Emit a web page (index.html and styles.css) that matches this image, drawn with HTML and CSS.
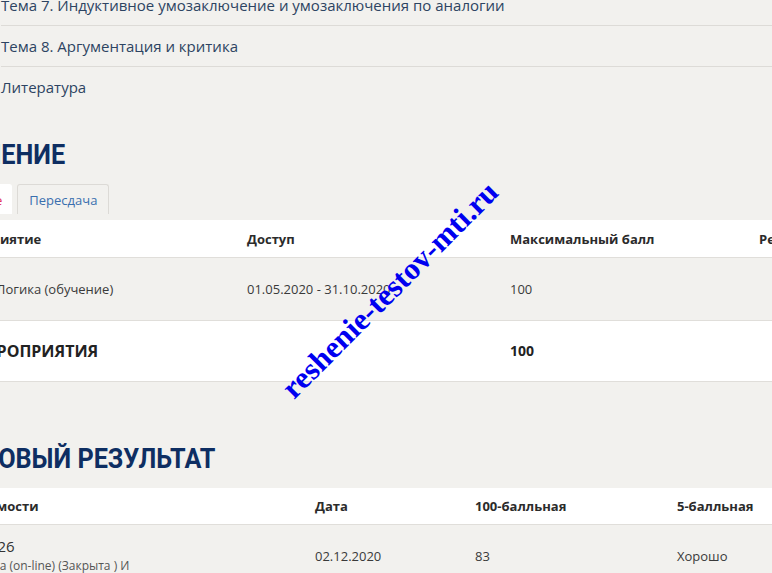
FILE: index.html
```html
<!DOCTYPE html>
<html lang="ru">
<head>
<meta charset="utf-8">
<title>Логика — обучение</title>
<link rel="stylesheet" href="styles.css">
</head>
<body>
<div class="viewport">
  <div class="page">
    <ul class="topics">
      <li>Тема 7. Индуктивное умозаключение и умозаключения по аналогии</li>
      <li>Тема 8. Аргументация и критика</li>
      <li>Литература</li>
    </ul>

    <h2 class="section-title section-title--first">Обучение</h2>

    <div class="tabs">
      <span class="tab tab--active">Обучение</span>
      <span class="tab">Пересдача</span>
    </div>

    <table class="grid grid--events">
      <thead>
        <tr>
          <th>Мероприятие</th>
          <th>Доступ</th>
          <th>Максимальный балл</th>
          <th>Результат</th>
        </tr>
      </thead>
      <tbody>
        <tr class="row-shaded">
          <td>Зачёт – Логика (обучение)</td>
          <td>01.05.2020 - 31.10.2020</td>
          <td>100</td>
          <td></td>
        </tr>
        <tr class="row-total">
          <td><span class="total-label">За мероприятия</span></td>
          <td></td>
          <td>100</td>
          <td></td>
        </tr>
      </tbody>
    </table>

    <h2 class="section-title section-title--second">Итоговый результат</h2>

    <table class="grid grid--result">
      <thead>
        <tr>
          <th>№ ведомости</th>
          <th>Дата</th>
          <th>100-балльная</th>
          <th>5-балльная</th>
        </tr>
      </thead>
      <tbody>
        <tr class="row-shaded">
          <td>
            <div class="sheet-no">ВД-11426</div>
            <div class="sheet-note">ЭК Логика (on-line) (Закрыта ) И</div>
          </td>
          <td>02.12.2020</td>
          <td>83</td>
          <td>Хорошо</td>
        </tr>
      </tbody>
    </table>
  </div>

  <span class="watermark">reshenie-testov-mti.ru</span>
</div>
</body>
</html>
```

FILE: styles.css
```css
html, body {
  margin: 0;
  padding: 0;
  background: #f2f1ee;
  overflow: hidden;
}

body {
  font-family: "Open Sans", "Liberation Sans", sans-serif;
  color: #333;
}

.viewport {
  position: relative;
  width: 772px;
  height: 573px;
  overflow: hidden;
}

/* page is scrolled right and down inside the window */
.page {
  width: 1100px;
  margin-left: -70px;
  margin-top: -15px;
}

/* topic list */
.topics {
  list-style: none;
  margin: 0;
  padding: 0 0 0 71px;
}

.topics li {
  padding: 10px 0;
  line-height: 20px;
  font-size: 15px;
  color: #2d4462;
  border-bottom: 1px solid #dddbd7;
}

.topics li:last-child {
  border-bottom: none;
}

/* section headings: a narrow display face */
.section-title {
  margin: 0 0 0 5px;
  font-family: Roboto, "Open Sans", sans-serif;
  font-size: 28px;
  line-height: 34px;
  font-weight: 700;
  text-transform: uppercase;
  color: #0e2e62;
  transform: scaleX(0.9);
  transform-origin: left center;
}

.section-title--first {
  margin-top: 31px;
}

.section-title--second {
  margin-top: 60px;
}

/* tabs */
.tabs {
  display: flex;
  gap: 5px;
  margin-top: 12px;
  height: 30px;
}

.tab {
  box-sizing: border-box;
  height: 30px;
  padding: 0 11px;
  line-height: 30px;
  font-size: 13px;
  color: #3a6fae;
  border: 1px solid #dcdad6;
  border-bottom: none;
  border-radius: 3px 3px 0 0;
}

.tab--active {
  background: #fff;
  border-color: #fff;
  color: #e2325f;
  padding: 0 9px 0 8px;
}

/* tables */
.grid {
  width: 100%;
  border-collapse: collapse;
  table-layout: fixed;
  font-size: 13px;
}

.grid--events {
  margin-top: 6px;
}

.grid--result {
  margin-top: 12px;
}

.grid th {
  background: #fff;
  text-align: left;
  font-weight: 700;
  color: #2b2b2b;
  padding: 10px 17px 9px;
  line-height: 18px;
  border-bottom: 1px solid #e0deda;
  white-space: nowrap;
}

.grid td {
  padding: 0 17px;
  line-height: 18px;
  border-bottom: 1px solid #e0deda;
  color: #3a3a3a;
  vertical-align: middle;
  white-space: nowrap;
}

.grid--events td {
  height: 62px;
}

.grid--events th:nth-child(1) { width: 266px; }
.grid--events th:nth-child(2) { width: 229px; }
.grid--events th:nth-child(3) { width: 215px; }

.grid--result th {
  padding: 9px 17px;
}

.grid--result th:nth-child(1) { width: 334px; }
.grid--result th:nth-child(2) { width: 126px; }
.grid--result th:nth-child(3) { width: 168px; }

.row-shaded td {
  background: #f2f1ee;
}

.row-total td {
  background: #fff;
  height: 60px;
  font-weight: 700;
  font-size: 14px;
  color: #222;
}

.total-label {
  font-size: 16px;
  text-transform: uppercase;
}

.grid--result td {
  padding-top: 12px;
  padding-bottom: 12px;
}

.sheet-no {
  font-size: 15px;
  line-height: 18px;
  margin-bottom: 2px;
  color: #333;
}

.sheet-note {
  font-size: 12px;
  line-height: 18px;
  color: #555;
}

/* diagonal site stamp over the content */
.watermark {
  position: absolute;
  left: 390px;
  top: 290px;
  transform: translate(-50%, -50%) rotate(-45deg);
  font-family: "Liberation Serif", "Times New Roman", serif;
  font-weight: 700;
  font-size: 31px;
  color: #0000f0;
  white-space: nowrap;
  pointer-events: none;
}
```
